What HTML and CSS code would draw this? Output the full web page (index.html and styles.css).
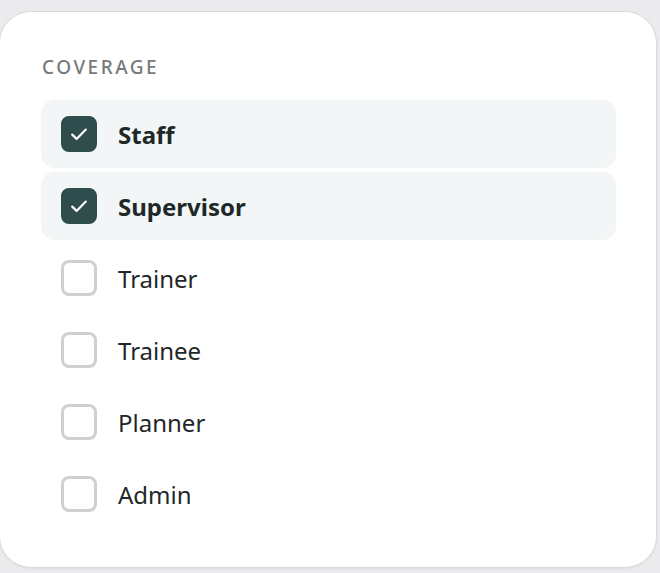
FILE: index.html
```html
<!DOCTYPE html>
<html>
<head>
    <link rel="stylesheet" href="styles.css">
</head>
<body>
    <div class="card">
        <h3 class="section-title">COVERAGE</h3>

        <div class="option-list">
            <label class="option checked">
                <span class="box">
                    <svg viewBox="0 0 20 20" width="20" height="20"><path d="M3.2 10.6l4.4 4.3L16.8 5.6" fill="none" stroke="#fff" stroke-width="2.2" stroke-linecap="round" stroke-linejoin="round"/></svg>
                </span>
                <span class="label">Staff</span>
            </label>
            <label class="option checked">
                <span class="box">
                    <svg viewBox="0 0 20 20" width="20" height="20"><path d="M3.2 10.6l4.4 4.3L16.8 5.6" fill="none" stroke="#fff" stroke-width="2.2" stroke-linecap="round" stroke-linejoin="round"/></svg>
                </span>
                <span class="label">Supervisor</span>
            </label>
            <label class="option">
                <span class="box"></span>
                <span class="label">Trainer</span>
            </label>
            <label class="option">
                <span class="box"></span>
                <span class="label">Trainee</span>
            </label>
            <label class="option">
                <span class="box"></span>
                <span class="label">Planner</span>
            </label>
            <label class="option">
                <span class="box"></span>
                <span class="label">Admin</span>
            </label>
        </div>
    </div>
</body>
</html>
```

FILE: styles.css
```css
:root {
    --page-bg: #ebebee;
    --card-border: #dadadd;
    --row-bg: #f2f6f6;
    --check-fill: #2f4d4d;
    --box-border: #d0d0d0;
    --text-dark: #1e2828;
    --text-muted: #777a7a;
}

* {
    margin: 0;
    padding: 0;
    box-sizing: border-box;
}

body {
    background: var(--page-bg);
    font-family: "Noto Sans", "Open Sans", sans-serif;
    color: var(--text-dark);
    padding: 11px 3px 0 0;
    min-height: 573px;
}

.card {
    background: #ffffff;
    border: 1px solid var(--card-border);
    border-radius: 32px;
    width: 658px;
    height: 557px;
    margin-left: -1px;
    padding: 41px 40px 0 41px;
    box-shadow: 0 1px 3px rgba(0, 0, 0, 0.05);
}

.section-title {
    font-size: 19px;
    font-weight: 500;
    letter-spacing: 2.5px;
    color: var(--text-muted);
    line-height: 28px;
    margin-bottom: 19px;
    margin-left: 1px;
}

.option-list {
    display: flex;
    flex-direction: column;
    gap: 4px;
}

.option {
    display: flex;
    align-items: center;
    gap: 21px;
    height: 68px;
    padding: 0 20px;
    border-radius: 14px;
    font-size: 24px;
}

.option.checked {
    background: var(--row-bg);
}

.option.checked .label {
    font-weight: 700;
}

.box {
    width: 36px;
    height: 36px;
    border-radius: 8px;
    border: 3px solid var(--box-border);
    display: flex;
    align-items: center;
    justify-content: center;
    flex-shrink: 0;
}

.option.checked .box {
    background: var(--check-fill);
    border-color: var(--check-fill);
}
```
